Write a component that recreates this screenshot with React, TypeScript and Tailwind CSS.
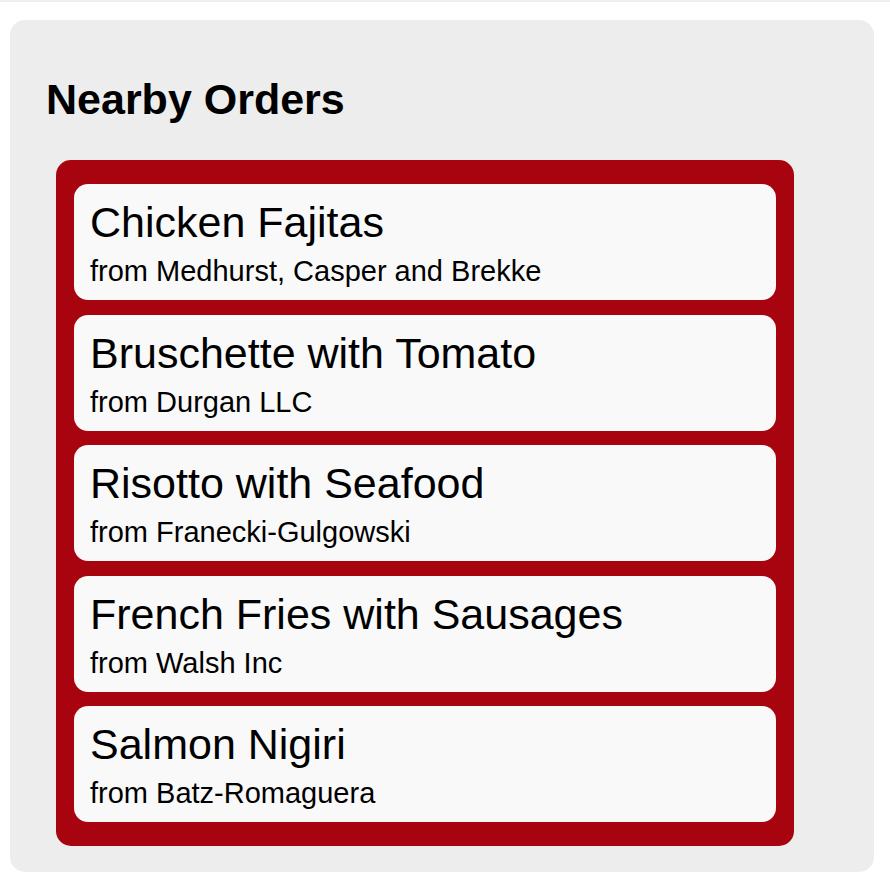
const orders = [
  { id: 1, dish: "Chicken Fajitas", restaurant: "Medhurst, Casper and Brekke" },
  { id: 2, dish: "Bruschette with Tomato", restaurant: "Durgan LLC" },
  { id: 3, dish: "Risotto with Seafood", restaurant: "Franecki-Gulgowski" },
  { id: 4, dish: "French Fries with Sausages", restaurant: "Walsh Inc" },
  { id: 5, dish: "Salmon Nigiri", restaurant: "Batz-Romaguera" },
];

export default function App() {
  return (
    <div className="min-h-[884px] w-[890px] bg-white font-['Liberation_Sans',Arial,sans-serif] text-black">
      <div className="h-[2px] bg-[#eeeeee]" />
      <section className="ml-[10px] mt-[18px] h-[852px] w-[864px] rounded-[15px] bg-[#ededed] pl-[36px] pt-[54px]">
        <h1 className="text-[43px] font-bold leading-[50px]">Nearby Orders</h1>

        <ul className="ml-[10px] mt-[36px] flex w-[738px] flex-col gap-[14.5px] rounded-[15px] bg-[#a8040f] px-[18px] py-[24px]">
          {orders.map((order) => (
            <li
              className="h-[116px] rounded-[14px] bg-[#f9f9f9] px-4 pt-[14px]"
              key={order.id}
            >
              <p className="text-[43px] leading-[48px]">{order.dish}</p>
              <p className="mt-[8px] text-[29px] leading-[34px]">from {order.restaurant}</p>
            </li>
          ))}
        </ul>
      </section>
    </div>
  );
}
